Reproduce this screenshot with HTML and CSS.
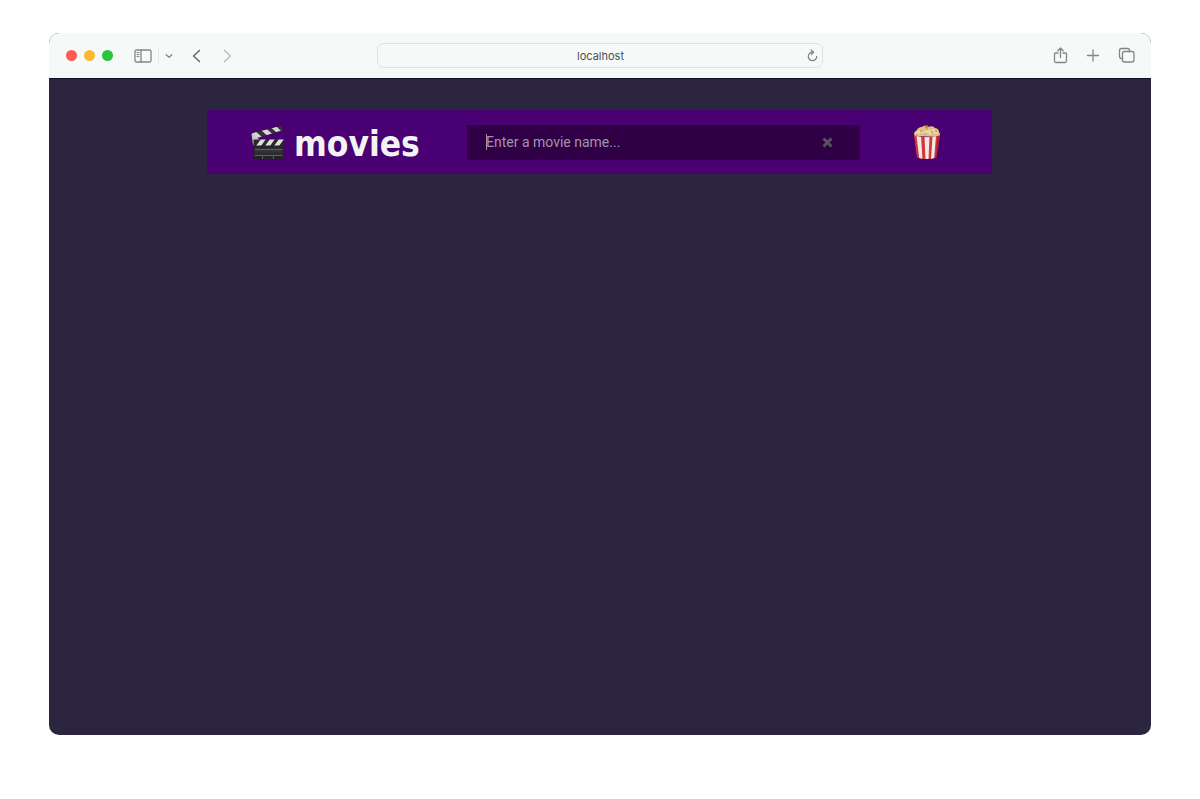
FILE: index.html
```html
<!DOCTYPE html>
<html lang="en">
<head>
<meta charset="utf-8">
<title>movies</title>
<link rel="stylesheet" href="styles.css">
</head>
<body>
<div class="window">
  <div class="toolbar">
    <div class="tools tools-left">
      <div class="lights">
        <button class="light close" aria-label="Close"></button>
        <button class="light minimize" aria-label="Minimize"></button>
        <button class="light expand" aria-label="Full screen"></button>
      </div>
      <div class="sidebar-tools">
        <button class="tool" aria-label="Sidebar">
          <svg width="18" height="14" viewBox="0 0 18 14"><rect x="1" y="1" width="16" height="12" rx="1.500"/><path d="M7 1v12"/><path class="thin" d="M3 3.5h2M3 5.5h2M3 7.5h2"/></svg>
        </button>
        <span class="divider"></span>
        <button class="tool" aria-label="Tab groups">
          <svg width="8" height="6" viewBox="0 0 8 6"><path d="M1.2 1.8 4 4.2l2.800-2.400"/></svg>
        </button>
      </div>
      <div class="history">
        <button class="tool back" aria-label="Back">
          <svg width="9" height="14" viewBox="0 0 9 14"><path d="M7.500 1.500 1.500 7l6 5.500"/></svg>
        </button>
        <button class="tool forward" aria-label="Forward">
          <svg width="9" height="14" viewBox="0 0 9 14"><path d="M1.500 1.500 7.500 7l-6 5.500"/></svg>
        </button>
      </div>
    </div>
    <div class="address">
      <input class="address-input" type="text" aria-label="Address" value="localhost">
      <button class="tool reload" aria-label="Reload">
        <svg width="11" height="13" viewBox="0 0 11 13"><path d="M6 3.300A4.200 4.200 0 1 0 9.700 7.500M4.200 1 6.600 3.300 4.400 5.600"/></svg>
      </button>
    </div>
    <div class="tools tools-right">
      <button class="tool" aria-label="Share">
        <svg width="15" height="18" viewBox="0 0 15 18"><path d="M5 6H2.500Q1.500 6 1.500 7v7q0 1.500 1.500 1.500h9q1.500 0 1.500-1.500V7q0-1-1-1H10M7.500 10.500V1M4.800 3.700l2.700-2.700 2.700 2.700"/></svg>
      </button>
      <button class="tool" aria-label="New tab">
        <svg width="14" height="16" viewBox="0 0 14 16"><path d="M7 2v11M1.500 7.500h11"/></svg>
      </button>
      <button class="tool" aria-label="Tab overview">
        <svg width="17" height="17" viewBox="0 0 17 17"><rect x="4.500" y="4.500" width="11.500" height="10.500" rx="2"/><path d="M4.500 11.500H3.500q-2 0-2-2V3.500q0-2 2-2h6q2 0 2 2v1"/></svg>
      </button>
    </div>
  </div>
  <main class="page">
    <header class="header">
      <div class="brand">
        <svg width="34" height="34" viewBox="0 0 34 34" aria-hidden="true">
          <defs>
            <linearGradient id="slate" x1="0" y1="0" x2="0" y2="1"><stop offset="0" stop-color="#222125"/><stop offset=".5" stop-color="#343337"/><stop offset="1" stop-color="#222024"/></linearGradient>
            <clipPath id="top"><path d="M.500 8.500 30.500.800l1.500 4.700L4 13.500z"/></clipPath>
            <clipPath id="bar"><path d="M2.500 14.500h31L32 20.500H2.500z"/></clipPath>
          </defs>
          <path fill="#232126" d="M2.500 18.500H32.500V32q0 2-2 2H5q-2 0-2.500-2z"/>
          <path fill="url(#slate)" d="M3.500 20.500h28V32h-28z"/>
          <g clip-path="url(#top)"><path fill="#343337" d="M0 0h34v14H0z"/><path fill="#d8d8d6" d="m0 7 4-1 7 6-5 2zM10 5l5-1.500 6 5-5 2zM20 2.500l5-1.500 5 5-5 1z"/></g>
          <path fill="#c9cac7" d="m.500 9 3-.500 1.500 4 4 2-4 2-2 4-1-1z"/>
          <g clip-path="url(#bar)"><path fill="#29282b" d="M0 14h34v7H0z"/><path fill="#dededb" d="M10 14h5l-5 7H5zM19 14h5l-5 7h-5zM28 14h5l-5 7h-5z"/></g>
          <path stroke="#626065" d="M4 24.500h27.500M4 30.500h27.500M11.500 31v3M22.500 31v3"/>
        </svg>
        <h1 class="title">movies</h1>
      </div>
      <form class="search">
        <input class="search-input" type="text" aria-label="Movie name" placeholder="Enter a movie name...">
        <span class="caret"></span>
        <button class="clear" type="button" aria-label="Clear">
          <svg width="11" height="11" viewBox="0 0 11 11"><path d="m1.500 1.500 8 8m0-8-8 8"/></svg>
        </button>
      </form>
      <div class="snack">
        <svg width="28" height="36" viewBox="0 0 28 36" role="img" aria-label="Popcorn">
          <defs><clipPath id="tub"><path d="M1 11.500q13 3.500 26 0l-3.500 22q-9.500 3-19.500 0z"/></clipPath></defs>
          <path fill="#dfc188" d="M1.500 12Q0 8 3.500 6.500 5 3 9 3q3-3 6 0 5-2 7 1 4 .500 4 4 2 2 0 5z"/>
          <path fill="#edd6a3" d="M4 7.500q3-3 5 0t5-3q3 3 6 1t5 4l-2 1-3-2-3 3-3-3-3 2-3-2-4 3-2-2z"/>
          <g fill="#c49b5c"><circle cx="8" cy="7" r="1"/><circle cx="14" cy="5" r="1"/><circle cx="19" cy="8" r="1"/><circle cx="12" cy="10" r="1"/><circle cx="23" cy="7" r="1"/><circle cx="4" cy="11" r="1"/></g>
          <path fill="#c97935" d="M11 2.500 14 1l2 2-2 1z"/>
          <g clip-path="url(#tub)"><path fill="#d3383b" d="M0 10h28v26H0z"/><path fill="#f6e8e2" d="M3.500 11.500H8L9.500 36H6.500zM11.500 12h5L15.500 36h-3zM19.500 12H23L21 36h-3z"/><path fill="#9b1736" opacity=".6" d="M24.500 10H28L24.500 36H22z"/></g>
        </svg>
      </div>
    </header>
  </main>
</div>
</body>
</html>
```
FILE: styles.css
```css
* { box-sizing: border-box; }

body {
  margin: 0;
  padding: 33px 49px 64px;
  min-height: 100vh;
  display: flex;
  background: #fff;
  font-family: Inter, "Liberation Sans", sans-serif;
}

button {
  padding: 0;
  border: 0;
  background: none;
}

svg { display: block; fill: none; }

.window {
  flex: 1;
  display: flex;
  flex-direction: column;
  border-radius: 10px;
  overflow: hidden;
  background: #2b253f;
}

.toolbar {
  display: grid;
  grid-template-columns: 1fr 446px 1fr;
  align-items: center;
  height: 46px;
  padding: 0 16px;
  background: #f5faf9;
  border-bottom: 1px solid #15102a;
}

.tools, .lights, .sidebar-tools, .history {
  display: flex;
  align-items: center;
}

.tools-left { padding-left: 1px; }

.lights { gap: 7px; }

.light {
  width: 11px;
  height: 11px;
  border-radius: 50%;
}

.close { background: #ff5a52; }
.minimize { background: #fdb92c; }
.expand { background: #27c53f; }

.sidebar-tools { gap: 6px; margin-left: 21px; }

.divider {
  width: 1px;
  height: 15px;
  background: #e4e8e7;
}

.history { gap: 22px; margin-left: 19px; }

.tool svg {
  stroke: #828685;
  stroke-width: 1.3;
  stroke-linecap: round;
  stroke-linejoin: round;
}

.tool .thin { stroke-width: 1; }
.back svg { stroke: #666a69; stroke-width: 1.5; }
.forward svg { stroke: #b4b8b7; }

.address {
  display: flex;
  align-items: center;
  height: 25px;
  padding-right: 4px;
  border: 1px solid #dfe4e3;
  border-radius: 6px;
}

.address-input {
  flex: 1;
  min-width: 0;
  padding: 0 0 0 16px;
  border: 0;
  background: none;
  color: #4b4e4d;
  font: 11px/16px Inter, "Liberation Sans", sans-serif;
  text-align: center;
}

.tools-right { justify-content: flex-end; gap: 18px; }

.page { padding: 31px 159px 0 158px; }

.header {
  display: grid;
  grid-template-columns: 260fr 393fr 132fr;
  align-items: center;
  height: 64px;
  background: #480072;
}

.brand {
  display: flex;
  align-items: center;
  gap: 9px;
  padding-left: 44px;
}

.title {
  margin: 0;
  padding-top: 4px;
  color: #f1f3f5;
  font: bold 35px/48px "DejaVu Sans Condensed", "Noto Sans", sans-serif;
}

.search {
  position: relative;
  display: flex;
  align-items: center;
  height: 35px;
  padding: 0 27px 0 19px;
  background: #300047;
}

.search-input {
  flex: 1;
  min-width: 0;
  padding: 0;
  border: 0;
  background: none;
  color: #f1f3f5;
  font: 14px/20px Roboto, "Liberation Sans", sans-serif;
}

.search-input::placeholder { color: #a393ac; opacity: 1; }

.caret {
  position: absolute;
  left: 19px;
  width: 1px;
  height: 16px;
  background: #a393ac;
}

.clear svg { stroke: #59515b; stroke-width: 3; }

.snack {
  display: flex;
  justify-content: center;
  padding-left: 2px;
}
```
